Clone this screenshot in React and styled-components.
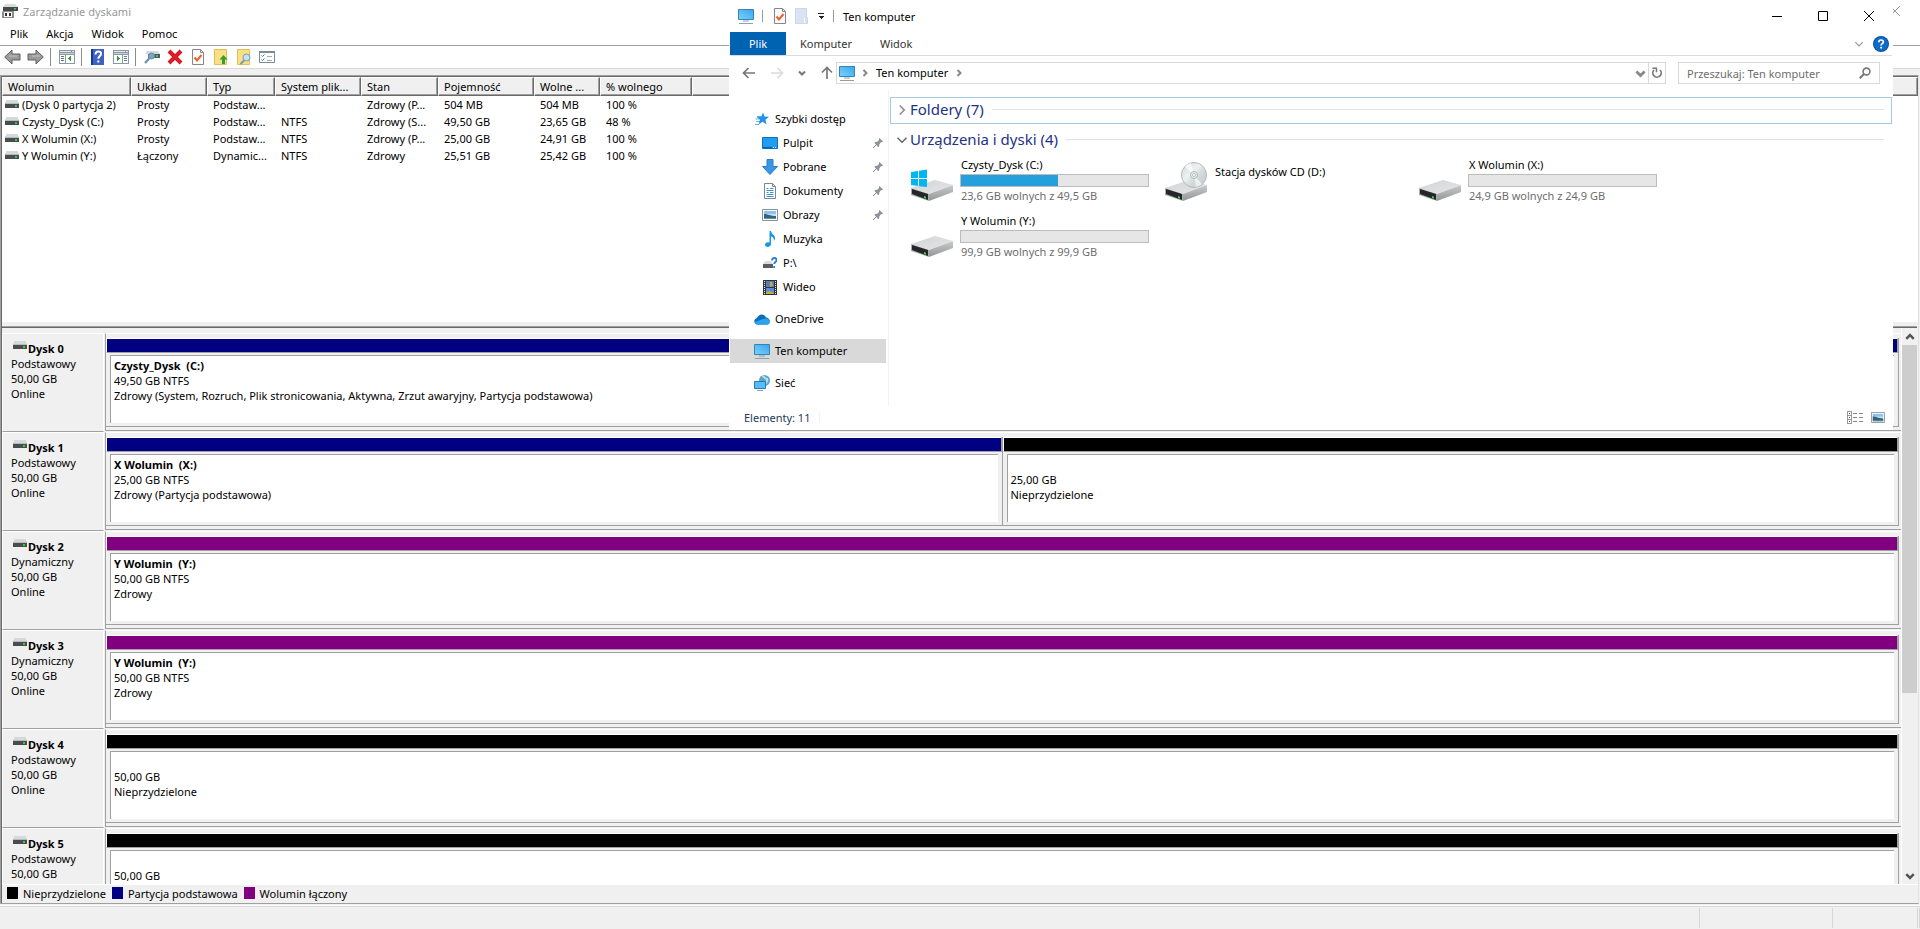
import React from "react";
import styled, { createGlobalStyle } from "styled-components";

const FONT = '"Noto Sans", "Open Sans", "Liberation Sans", sans-serif';
const NAVY = "#000080";
const PURPLE = "#800080";
const BLACK = "#000000";

const GlobalStyle = createGlobalStyle`
  *, *::before, *::after { box-sizing: border-box; }
  body {
    margin: 0;
    background: #f0f0f0;
    color: #000;
    font-family: ${FONT};
    font-size: 11px;
    line-height: 15px;
    overflow: hidden;
  }
  button, input { font: inherit; color: inherit; }
  button { border: 0; padding: 0; background: none; }
  a { color: inherit; text-decoration: none; }
  svg { display: block; flex: none; }
  h1, h2, p, ul { margin: 0; padding: 0; font: inherit; list-style: none; }
`;

/* ---------- Icons ---------- */

const DiskStrip = () => (
  <svg width="14" height="9" viewBox="0 0 14 9" shapeRendering="crispEdges">
    <path d="M1 0h12l1 4H0z" fill="#d5d9db" />
    <path d="M0 4h14v4H0z" fill="#4a4d50" />
    <path d="M0 3h14v1H0z" fill="#b9bcbf" />
    <path d="M10 5h2v2h-2z" fill="#2bd13c" />
  </svg>
);

const AppIcon = () => (
  <svg width="16" height="16" viewBox="0 0 16 16">
    <path d="M3 1h10l3 3H1z" fill="#d9dcde" />
    <path d="M1 4h15v4H1z" fill="#46494c" />
    <path d="M12 5h2v1.500h-2z" fill="#35d047" />
    <path d="M1 8h11v7H0V9z" fill="#8b8e90" />
    <path d="M2 9h8v5H2z" fill="#f6f6f6" />
    <path d="M3 10h2v3H3zM7 10h2v3H7z" fill="#333" />
  </svg>
);

const ToolArrow = ({ flip }) => (
  <svg width="17" height="16" viewBox="0 0 17 16">
    <path
      d="M.7 8 8 1v4h8v6H8v4z"
      transform={flip ? "matrix(-1 0 0 1 17 0)" : undefined}
      fill="#9a9a9a"
      stroke="#5f5f5f"
    />
    <path d="M5 7h8" stroke="#c4c4c4" />
  </svg>
);

const PaneIcon = ({ flip }) => (
  <svg width="16" height="14" viewBox="0 0 16 14" shapeRendering="crispEdges">
    <path d="M0 0h16v14H0z" fill="#8b98a6" />
    <path d="M1 1h11v1H1zM13 1h2v1h-2z" fill="#e6eaee" />
    <path d="M1 3h14v1H1z" fill="#c9d0d6" />
    <path d="M1 5h14v8H1z" fill="#fff" />
    <g transform={flip ? "matrix(-1 0 0 1 16 0)" : undefined}>
      <path d="M6 4h1v9H6z" fill="#8b98a6" />
      <path d="M2 6h3v1H2zM2 8h3v1H2zM2 10h3v1H2z" fill="#6a7684" />
      <path d="M12 5v7L9 8.500z" fill="#2fa52f" />
    </g>
  </svg>
);

const HelpTool = () => (
  <svg width="13" height="16" viewBox="0 0 13 16">
    <path d="M0 0h13v16H0z" fill="#3d62c4" />
    <path d="M0 0h2v16H0z" fill="#173a91" />
    <path d="M4.500 5.500c0-4 5.500-4 5.500-.8 0 2.500-2.700 2.500-2.700 5M7.300 11.500v2" stroke="#fff" strokeWidth="2" fill="none" />
  </svg>
);

const DiskSearch = () => (
  <svg width="16" height="14" viewBox="0 0 16 14">
    <path d="M3 1h11l2 3H1z" fill="#d5d9dc" />
    <path d="M4 4h12v4H4z" fill="#4a5a66" />
    <path d="M12 5h2v2h-2z" fill="#2bd13c" />
    <circle cx="7.500" cy="6" r="3" fill="#7fa6be" stroke="#5e8ba8" />
    <path d="M5.200 8.500 1 13" stroke="#6b8ca3" strokeWidth="2" />
  </svg>
);

const RedCross = () => (
  <svg width="16" height="16" viewBox="0 0 16 16">
    <path d="m2 2 12 12M14 2 2 14" stroke="#d0121b" strokeWidth="4" />
    <path d="m2.500 2.500 11 11M13.500 2.500l-11 11" stroke="#e02028" strokeWidth="2" />
  </svg>
);

const CheckDoc = () => (
  <svg width="12" height="16" viewBox="0 0 12 16">
    <path d="M.5.500h8l3 3v12H.5z" fill="#fbfbfb" stroke="#878787" />
    <path d="M8.500.500v3h3" fill="none" stroke="#878787" />
    <path d="m2.500 8.500 2.500 3 4.500-5.500" fill="none" stroke="#e8622a" strokeWidth="2" />
  </svg>
);

const FolderDoc = ({ kind }) => (
  <svg width="14" height="16" viewBox="0 0 14 16">
    <path d="M.5.500h12v15H.5z" fill="#fbdf85" stroke="#e3bf55" />
    {kind === "up" ? (
      <path d="m9.500 6 4 4.500h-2.500V15H8v-4.500H5.500z" fill="#2ea12e" />
    ) : (
      <>
        <circle cx="9.500" cy="8.500" r="3.500" fill="#c5e2f2" stroke="#6f9dba" />
        <path d="M7 11.500 3.500 15" stroke="#7d97a8" strokeWidth="2" />
      </>
    )}
  </svg>
);

const OptionsIcon = () => (
  <svg width="16" height="12" viewBox="0 0 16 12">
    <path d="M.5.500h15v11H.5z" fill="#fff" stroke="#7c8a96" />
    <path d="M0 0h16v2H0z" fill="#7c8a96" />
    <path d="m2.500 4.500 1 1 2-2M2.500 8.500l1 1 2-2" stroke="#2c86d6" fill="none" />
    <path d="M8 5.500h5M8 9.500h5" stroke="#a3abb2" />
  </svg>
);

const Monitor = () => (
  <svg width="16" height="16" viewBox="0 0 16 16">
    <defs>
      <linearGradient id="screen" x1="0" y1="1" x2="1" y2="0">
        <stop offset="0" stopColor="#7fd0fb" />
        <stop offset="1" stopColor="#34a8f0" />
      </linearGradient>
    </defs>
    <path d="M.5 1.500h15v10H.5z" fill="url(#screen)" stroke="#3683b4" />
    <path d="M5 13h6M1 15.500h14" stroke="#8fa1b0" />
  </svg>
);

const FadedDoc = () => (
  <svg width="13" height="16" viewBox="0 0 13 16">
    <path d="M.5.500h11v9h1v6H.5z" fill="#d9e4f3" stroke="#cbd8ea" />
    <path d="M9.500 10v5" stroke="#f5f8fc" />
  </svg>
);

const CustomizeCaret = () => (
  <svg width="8" height="8" viewBox="0 0 8 8" shapeRendering="crispEdges">
    <path d="M1 1h6v1H1zM1 4h6L4 7z" fill="#222" />
  </svg>
);

const Minimize = () => (
  <svg width="10" height="10" viewBox="0 0 10 10">
    <path d="M0 5.500h10" stroke="#000" />
  </svg>
);
const Maximize = () => (
  <svg width="10" height="10" viewBox="0 0 10 10">
    <path d="M.5.500h9v9h-9z" stroke="#000" fill="none" />
  </svg>
);
const Close = ({ color = "#000" }) => (
  <svg width="10" height="10" viewBox="0 0 10 10">
    <path d="m0 0 10 10M10 0 0 10" stroke={color} />
  </svg>
);

const Chevron = ({ dir = "down", size = 8, color = "#666", weight = 1 }) => {
  const turn = { down: 0, left: 90, up: 180, right: 270 }[dir];
  return (
    <svg width={size} height={size} viewBox="0 0 8 8">
      <path d="m1 2.500 3 3 3-3" transform={`rotate(${turn} 4 4)`} fill="none" stroke={color} strokeWidth={weight} />
    </svg>
  );
};

const NavArrow = ({ turn = 0, color = "#777" }) => (
  <svg width="14" height="14" viewBox="0 0 14 14">
    <path d="M13 7H2M6.500 2 1.500 7l5 5" transform={`rotate(${turn} 7 7)`} fill="none" stroke={color} strokeWidth="1.700" />
  </svg>
);

const HelpBadge = () => (
  <svg width="16" height="16" viewBox="0 0 16 16">
    <circle cx="8" cy="8" r="8" fill="#0b4f9e" />
    <circle cx="8" cy="8" r="7" fill="#0f6cc4" />
    <path d="M5.800 6.200c0-3 4.500-2.800 4.500-.2 0 1.700-2.200 1.700-2.200 3.400M8.100 10.800v1.700" stroke="#fff" strokeWidth="1.700" fill="none" />
  </svg>
);

const Refresh = () => (
  <svg width="12" height="12" viewBox="0 0 12 12">
    <path d="M3 3a4.200 4.200 0 1 0 6 0" fill="none" stroke="#777" strokeWidth="1.700" />
    <path d="M1.500 1.300h4v4" fill="none" stroke="#777" strokeWidth="1.500" />
  </svg>
);

const Magnifier = () => (
  <svg width="12" height="12" viewBox="0 0 12 12">
    <circle cx="7.500" cy="4.500" r="3.400" fill="none" stroke="#777" strokeWidth="1.600" />
    <path d="M5 7 .7 11.300" stroke="#777" strokeWidth="2" />
  </svg>
);

const StarIcon = () => (
  <svg width="16" height="14" viewBox="0 0 16 14">
    <path d="M3 4.500h4M1.500 7h4M2 9.500h4M1 12.500h4" stroke="#62b6ef" />
    <path d="m9 .500 1.500 4 4.500.3-3.500 2.900 1 4.800L8.700 9.800 4.500 12.500 6 7.800 2.700 5l4.500-.3z" fill="#2492e6" />
  </svg>
);

const DesktopIcon = () => (
  <svg width="16" height="12" viewBox="0 0 16 12">
    <path d="M.5.500h15v11H.5z" fill="#1e9df1" stroke="#0a74c2" />
    <path d="M11 10.500h1M13 10.500h1" stroke="#d8effd" />
    <path d="M1 10.500h9" stroke="#0d5fa3" />
  </svg>
);

const DownloadIcon = () => (
  <svg width="16" height="16" viewBox="0 0 16 16">
    <path d="M5 .5h6v7h4.500L8 15.500.500 7.500H5z" fill="#3a96e4" stroke="#2b7cc8" />
  </svg>
);

const DocumentIcon = () => (
  <svg width="12" height="16" viewBox="0 0 12 16">
    <path d="M.5.500h8l3 3v12H.5z" fill="#fff" stroke="#7d868e" />
    <path d="M2.500 5.500h2M6 5.500h3.500M2.500 7.500h7M2.500 9.500h2M6 9.500h3.500M2.500 11.500h7M2.500 13.500h7" stroke="#3b92cf" />
    <path d="M8.500.500v3h3" fill="none" stroke="#7d868e" />
  </svg>
);

const PictureIcon = ({ width = 16, height = 12 }) => (
  <svg width={width} height={height} viewBox="0 0 16 12" preserveAspectRatio="none">
    <path d="M.5.500h15v11H.5z" fill="#fff" stroke="#8a9299" />
    <path d="M2 2h12v4H2z" fill="#8cc3ee" />
    <path d="M2 5h12v3H2z" fill="#c6e2f3" />
    <path d="M2 5c4 0 6 2 12 2v3H2z" fill="#34647a" />
    <path d="M2 9h12v1H2z" fill="#5d8fb0" />
  </svg>
);

const MusicIcon = () => (
  <svg width="12" height="16" viewBox="0 0 12 16">
    <path d="M5.500 0h1.500c.3 3 4.500 4 4 7.500-.2 1.500-1 2-1.300 2.500.5-3-.7-4-2.700-4.500V13c0 3.500-6 4-6 .8 0-2.300 2.800-3 4.500-2.200z" fill="#1b97e5" />
  </svg>
);

const UnknownDrive = () => (
  <svg width="14" height="12" viewBox="0 0 14 12">
    <path d="M2 4h6l2 3H0z" fill="#dadcdf" />
    <path d="M0 7h10v4H0z" fill="#5a5d60" />
    <path d="M9 3.500c0-3.500 4.500-3 4.500-.5 0 2-2.300 2-2.300 4M11.200 9v2" stroke="#2a7fc9" strokeWidth="1.800" fill="none" />
  </svg>
);

const VideoIcon = () => (
  <svg width="14" height="15" viewBox="0 0 14 15">
    <path d="M0 0h14v15H0z" fill="#333" />
    <path d="M3 1h8v6H3z" fill="#4f7ec2" />
    <path d="M3 8h8v6H3z" fill="#5a8fd8" />
    <path d="M7 2h2l1 4-3 1zM3 12l3-1 5 2v1H3z" fill="#cda83c" />
    <path d="M1.500 1v14M12.500 1v14" stroke="#eee" strokeDasharray="1 1" />
  </svg>
);

const CloudIcon = () => (
  <svg width="16" height="11" viewBox="0 0 16 11">
    <path d="M4 10.500C-1 10.500-.5 4.500 3 4c1.500-4 7-5 9-.500C16.500 3.500 17 10.500 13 10.500z" fill="#0f6cbd" />
    <path d="M4 10.700c-2.500 0-3-2-2.500-3L9 5c4-1.500 7 0 7 2.500 0 2-1.300 3.200-3 3.200z" fill="#2ba4ec" />
  </svg>
);

const NetworkIcon = () => (
  <svg width="16" height="16" viewBox="0 0 16 16">
    <circle cx="10.500" cy="5.500" r="5.500" fill="#5ba4c9" />
    <path d="M8 1c3 0 2 3 5 3 1 2-1 4-2 5" fill="none" stroke="#b9dfec" strokeWidth="2" />
    <path d="M.5 6.500h11v7H.5z" fill="#58bdf7" stroke="#287cb5" />
    <path d="M3 15.500h6" stroke="#8fa1b0" />
  </svg>
);

const PinIcon = () => (
  <svg width="10" height="10" viewBox="0 0 10 10">
    <path d="m6.500 0 3.500 3.500-1 .7-.7-.2L6.500 6 6 8.500l-1 .5L1.500 5l.5-1 2.300-.3L6.200 2 5.800 1z" fill="#8b9399" />
    <path d="M3.500 6.500 0 10" stroke="#8b9399" />
  </svg>
);

const DriveGraphic = styled.svg`
  margin-top: 5px;
`;

const DriveIcon = ({ kind }) => (
  <DriveGraphic width="44" height="40" viewBox="0 0 44 40">
    <defs>
      <linearGradient id="lid" x1="0" y1="0" x2="1" y2="1">
        <stop offset="0" stopColor="#d2d3d5" />
        <stop offset="1" stopColor="#e6e7e9" />
      </linearGradient>
      <linearGradient id="side" x1="0" y1="0" x2="0" y2="1">
        <stop offset="0" stopColor="#c9cacc" />
        <stop offset="1" stopColor="#949597" />
      </linearGradient>
      <linearGradient id="disc" x1="0" y1="0" x2="1" y2="1">
        <stop offset="0" stopColor="#cfd6d8" />
        <stop offset=".4" stopColor="#eef1f1" />
        <stop offset=".6" stopColor="#d2dcd9" />
        <stop offset="1" stopColor="#c3c8cc" />
      </linearGradient>
    </defs>
    <path d="M1 26 25 18l18 5-24 9z" fill="url(#lid)" />
    <path d="m19 32 24-9v7l-24 9z" fill="url(#side)" />
    <path d="m1 26 18 6v7L1 33z" fill="#a9aaac" />
    <path d="m2 27 16 5v6L2 32z" fill="#252627" />
    <path d="m14 34 2 .7v2l-2-.7z" fill="#39d84c" />
    {kind === "system" && (
      <path d="m1 10 7-1v7H1zM9 8.800 17 7.500V16H9zM1 17h7v7l-7-1zM9 17h8v8L9 24.200z" fill="#00b7f1" />
    )}
    {kind === "cd" && (
      <>
        <circle cx="30" cy="13" r="12.500" fill="url(#disc)" stroke="#b3b8ba" />
        <path d="M30 13 21 4.500A12 12 0 0 1 27 1z" fill="#fff" opacity=".7" />
        <path d="m30 13 8 9a12 12 0 0 1-6 3z" fill="#fff" opacity=".6" />
        <circle cx="30" cy="13" r="3.500" fill="#eef0f0" stroke="#aeb3b5" />
        <circle cx="30" cy="13" r="1.500" fill="#fff" stroke="#b8bdbf" />
      </>
    )}
  </DriveGraphic>
);

const DetailsIcon = () => (
  <svg width="17" height="13" viewBox="0 0 17 13" shapeRendering="crispEdges">
    <path d="M.5.500h4v4h-4zM.5 4.500h4v4h-4zM.5 8.500h4v4h-4z" fill="#fff" stroke="#999" />
    <path d="M2 2h1v1H2zM2 6h1v1H2zM2 10h1v1H2z" fill="#555" />
    <path d="M6 2h4v1H6zM12 2h4v1h-4zM6 6h4v1H6zM12 6h4v1h-4zM6 10h4v1H6zM12 10h4v1h-4z" fill="#888" />
  </svg>
);

/* ---------- Disk management window ---------- */

const Desktop = styled.main`
  position: relative;
  display: flex;
  flex-direction: column;
  height: 100vh;
`;

const TitleBar = styled.header`
  display: flex;
  align-items: center;
  gap: 5px;
  height: 24px;
  padding: 0 20px 2px 2px;
  background: #fff;
  color: #999;
`;

const Title = styled.h1`
  flex: 1;
`;

const MenuBar = styled.nav`
  display: flex;
  gap: 18px;
  height: 22px;
  padding: 0 10px 2px;
  background: #fff;
  border-bottom: 1px solid #a0a0a0;
`;

const Toolbar = styled.div`
  display: flex;
  align-items: center;
  gap: 6px;
  height: 23px;
  padding: 0 4px;
  background: #fff;
  border-bottom: 1px solid #d9d9d9;
`;

const ToolButton = styled.button`
  display: grid;
  place-items: center;
  width: 17px;
  height: 20px;
`;

const Separator = styled.span`
  width: 1px;
  height: ${(p) => p.$height || 18}px;
  margin-right: 1px;
  background: ${(p) => p.$color || "#8c8c8c"};
`;

const Frame = styled.section`
  flex: 1;
  min-height: 0;
  display: flex;
  flex-direction: column;
  margin: 6px 1px 1px 0;
  border: 1px solid #a0a0a0;
  border-right-color: #e3e3e3;
  box-shadow: inset 1px 1px 0 #696969;
  padding: 1px 0 0 1px;
`;

const VolumePane = styled.div`
  flex: none;
  height: 243px;
  background: #fff;
`;

const VolumeTable = styled.table`
  width: 100%;
  table-layout: fixed;
  border-collapse: separate;
  border-spacing: 0;
  th, td {
    padding: 0 0 0 6px;
    text-align: left;
    font-weight: 400;
    white-space: nowrap;
    overflow: hidden;
  }
  th {
    height: 19px;
    padding-left: 5px;
    background: #f0f0f0;
    border: 1px solid #fff;
    border-right-color: #696969;
    border-bottom-color: #696969;
    box-shadow: inset -1px -1px 0 #a0a0a0;
  }
  td { height: 17px; }
`;

const VolumeName = styled.span`
  display: flex;
  align-items: center;
  gap: 3px;
  margin-left: -3px;
`;

const Splitter = styled.div`
  flex: none;
  height: 8px;
  margin-right: 1px;
  background: #f0f0f0;
  border-bottom: 1px solid #696969;
  box-shadow: inset 0 -1px 0 #a0a0a0, inset 0 3px 0 -1px #fff;
`;

const DiskPane = styled.div`
  flex: 1;
  min-height: 0;
  display: flex;
  overflow: hidden;
`;

const DiskList = styled.ul`
  flex: 1;
  padding-top: 5px;
  overflow: hidden;
  border-right: 1px solid #fff;
`;

const DiskRow = styled.li`
  display: flex;
  height: 99px;
`;

const DiskLabel = styled.div`
  width: 102px;
  padding: 7px 8px;
  border: 1px solid #fff;
  border-bottom-color: #a0a0a0;
`;

const DiskName = styled.h2`
  display: flex;
  gap: 1px;
  padding-left: 2px;
  font-weight: 700;
`;

const Partitions = styled.div`
  flex: 1;
  display: flex;
  margin: 0 0 1px 1px;
  padding: 4px 2px 3px 0;
  border-left: 1px solid #a0a0a0;
  border-top: 1px solid #fff;
  border-bottom: 1px solid #a0a0a0;
`;

const Partition = styled.div`
  flex: 1;
  display: flex;
  flex-direction: column;
  border-right: 1px solid #a0a0a0;
  border-bottom: 1px solid #a0a0a0;
`;

const PartitionBar = styled.div`
  height: 15px;
  background: ${(p) => p.$color};
  border: 1px solid #fff;
  border-right-color: #a0a0a0;
  border-bottom-color: #a0a0a0;
`;

const PartitionBody = styled.div`
  flex: 1;
  margin: 2px 4px 3px 4px;
  padding: 2px 3px;
  background: #fff;
  border: solid #a0a0a0;
  border-width: 1px 0 0 1px;
  white-space: pre;
`;

const PartitionName = styled.p`
  min-height: 15px;
  font-weight: 700;
`;

const ScrollTrack = styled.div`
  display: flex;
  flex-direction: column;
  width: 16px;
  padding-right: 1px;
`;

const ScrollButton = styled.button`
  display: grid;
  place-items: center;
  height: 17px;
`;

const ScrollRun = styled.div`
  flex: 1;
`;

const ScrollThumb = styled.div`
  height: calc(100% * 2 / 3);
  background: #cdcdcd;
`;

const Legend = styled.ul`
  display: flex;
  align-items: center;
  gap: 6px;
  height: 19px;
  padding: 0 0 2px 5px;
  border-top: 1px solid #fff;
`;

const LegendItem = styled.li`
  display: flex;
  align-items: center;
  gap: 5px;
  &::before {
    content: "";
    width: 11px;
    height: 12px;
    background: ${(p) => p.$color};
  }
`;

const StatusBar = styled.footer`
  display: flex;
  height: 24px;
  padding-top: 2px;
  border-top: 1px solid #fff;
  box-shadow: inset 0 1px 0 #d7d7d7;
`;

const StatusCell = styled.div`
  width: ${(p) => p.$width};
  flex: ${(p) => (p.$width ? "none" : 1)};
  margin-bottom: 1px;
  border-right: 1px solid #d7d7d7;
`;

/* ---------- Explorer window ---------- */

const Explorer = styled.section`
  position: absolute;
  top: 0;
  left: 729px;
  right: 27px;
  background: #fff;
  padding: 0 1px;
`;

const ExplorerTitle = styled.header`
  display: flex;
  align-items: center;
  gap: 8px;
  height: 32px;
  padding: 0 0 0 8px;
`;

const QuickAccess = styled.div`
  display: flex;
  gap: 9px;
  align-items: center;
  padding: 0 0 0 2px;
`;

const ExplorerName = styled.h1`
  flex: 1;
`;

const WindowButton = styled.button`
  display: grid;
  place-items: center;
  width: 46px;
  height: 32px;
`;

const WindowButtons = styled.div`
  display: flex;
`;

const Tabs = styled.nav`
  display: flex;
  align-items: center;
  height: 24px;
  padding-right: 3px;
  box-shadow: inset 0 -1px 0 #dadbdc;
`;

const Tab = styled.button`
  min-width: 56px;
  height: 23px;
  padding: 0 14px;
  align-self: flex-start;
  background: ${(p) => (p.$active ? "#0063b1" : "none")};
  color: ${(p) => (p.$active ? "#fff" : "#333")};
`;

const TabTools = styled.div`
  display: flex;
  align-items: center;
  gap: 9px;
  margin-left: auto;
`;

const AddressRow = styled.div`
  display: flex;
  align-items: center;
  height: 34px;
  padding: 0 12px;
`;

const NavButtons = styled.div`
  display: flex;
  align-items: center;
  gap: 14px;
  width: 94px;
  padding-bottom: 1px;
`;

const IconButton = styled.button`
  display: grid;
  place-items: center;
  height: 20px;
`;

const AddressBox = styled.div`
  flex: 1;
  display: flex;
  align-items: center;
  gap: 6px;
  height: 22px;
  padding-left: 2px;
  border: 1px solid #d9d9d9;
`;

const Crumb = styled.a`
  padding: 0 1px 2px;
`;

const AddressEnd = styled.div`
  display: flex;
  align-items: center;
  height: 20px;
  margin-left: auto;
`;

const RefreshButton = styled(IconButton)`
  width: 17px;
  margin-left: 2px;
  border-left: 1px solid #d9d9d9;
`;

const SearchBox = styled.label`
  display: flex;
  align-items: center;
  width: 202px;
  height: 22px;
  margin-left: 12px;
  padding: 0 8px;
  border: 1px solid #d9d9d9;
`;

const SearchInput = styled.input`
  flex: 1;
  min-width: 0;
  height: 20px;
  padding: 0;
  border: 0;
  outline: 0;
  background: none;
  &::placeholder { color: #6d6d6d; opacity: 1; }
`;

const ExplorerBody = styled.div`
  display: flex;
  min-height: 316px;
`;

const NavPane = styled.ul`
  width: 159px;
  padding: 17px 2px 0 0;
  border-right: 1px solid #f2f2f2;
`;

const NavItem = styled.li`
  margin-bottom: ${(p) => (p.$last ? 8 : 0)}px;
  background: ${(p) => (p.$selected ? "#d9d9d9" : "none")};
`;

const NavLink = styled.a`
  display: flex;
  align-items: center;
  gap: 5px;
  height: 24px;
  padding: 0 3px 0 ${(p) => (p.$child ? 32 : 24)}px;
`;

const NavGlyph = styled.span`
  display: grid;
  place-items: center;
  width: 16px;
`;

const NavText = styled.span`
  flex: 1;
  padding-bottom: 2px;
`;

const Content = styled.div`
  flex: 1;
  padding: 7px 0 0 1px;
`;

const GroupHeader = styled.button`
  display: flex;
  align-items: center;
  gap: 2px;
  width: 100%;
  height: 27px;
  margin-bottom: 3px;
  padding: 0 7px 2px 5px;
  border: 1px solid ${(p) => (p.$focused ? "#a6cbe0" : "transparent")};
  color: #1e3287;
  font-size: 15px;
  &::after {
    content: "";
    flex: 1;
    height: 1px;
    margin-left: 6px;
    background: #e2e2e2;
  }
`;

const Drives = styled.ul`
  display: grid;
  grid-template-columns: repeat(auto-fill, 254px);
  padding-left: 20px;
`;

const Drive = styled.li`
  display: flex;
  align-items: flex-start;
  gap: 6px;
  height: 56px;
`;

const DriveInfo = styled.div`
  flex: none;
  width: 189px;
  padding-top: ${(p) => (p.$plain ? 7 : 0)}px;
`;

const DriveText = styled.p`
  padding-left: 1px;
  color: ${(p) => (p.$muted ? "#6d6d6d" : "#000")};
`;

const Usage = styled.div`
  height: 13px;
  margin: 2px 0 1px;
  background: #e6e6e6;
  border: 1px solid #bcbcbc;
`;

const UsageFill = styled.div`
  height: 100%;
  background: #26a0da;
`;

const ExplorerStatus = styled.footer`
  display: flex;
  align-items: center;
  gap: 9px;
  height: 24px;
  padding: 0 7px 2px 14px;
  color: #1e395b;
`;

const ViewButtons = styled.div`
  display: flex;
  align-items: center;
  gap: 7px;
  margin-left: auto;
`;

/* ---------- Data ---------- */

const columns = [
  ["Wolumin", 129],
  ["Układ", 76],
  ["Typ", 68],
  ["System plik...", 86],
  ["Stan", 77],
  ["Pojemność", 96],
  ["Wolne ...", 66],
  ["% wolnego", 92],
  ["", null],
];

const volumes = [
  ["(Dysk 0 partycja 2)", "Prosty", "Podstaw...", "", "Zdrowy (P...", "504 MB", "504 MB", "100 %"],
  ["Czysty_Dysk (C:)", "Prosty", "Podstaw...", "NTFS", "Zdrowy (S...", "49,50 GB", "23,65 GB", "48 %"],
  ["X Wolumin (X:)", "Prosty", "Podstaw...", "NTFS", "Zdrowy (P...", "25,00 GB", "24,91 GB", "100 %"],
  ["Y Wolumin (Y:)", "Łączony", "Dynamic...", "NTFS", "Zdrowy", "25,51 GB", "25,42 GB", "100 %"],
];

const spanned = { color: PURPLE, name: "Y Wolumin  (Y:)", lines: ["50,00 GB NTFS", "Zdrowy"] };
const unallocated = (...lines) => ({ color: BLACK, name: "", lines });

const disks = [
  {
    info: ["Podstawowy", "50,00 GB", "Online"],
    parts: [
      {
        color: NAVY,
        name: "Czysty_Dysk  (C:)",
        lines: [
          "49,50 GB NTFS",
          "Zdrowy (System, Rozruch, Plik stronicowania, Aktywna, Zrzut awaryjny, Partycja podstawowa)",
        ],
      },
    ],
  },
  {
    info: ["Podstawowy", "50,00 GB", "Online"],
    parts: [
      { color: NAVY, name: "X Wolumin  (X:)", lines: ["25,00 GB NTFS", "Zdrowy (Partycja podstawowa)"] },
      unallocated("25,00 GB", "Nieprzydzielone"),
    ],
  },
  { info: ["Dynamiczny", "50,00 GB", "Online"], parts: [spanned] },
  { info: ["Dynamiczny", "50,00 GB", "Online"], parts: [spanned] },
  { info: ["Podstawowy", "50,00 GB", "Online"], parts: [unallocated("50,00 GB", "Nieprzydzielone")] },
  { info: ["Podstawowy", "50,00 GB"], parts: [unallocated("50,00 GB")] },
];

const tools = [
  ["Wstecz", <ToolArrow />],
  ["Dalej", <ToolArrow flip />],
  null,
  ["Drzewo konsoli", <PaneIcon />],
  null,
  ["Pomoc", <HelpTool />],
  ["Okienko akcji", <PaneIcon flip />],
  null,
  ["Skanuj dyski", <DiskSearch />],
  ["Usuń", <RedCross />],
  ["Właściwości", <CheckDoc />],
  ["Otwórz", <FolderDoc kind="up" />],
  ["Eksploruj", <FolderDoc />],
  ["Opcje", <OptionsIcon />],
];

const places = [
  { name: "Szybki dostęp", icon: <StarIcon /> },
  { name: "Pulpit", icon: <DesktopIcon />, child: true, pinned: true },
  { name: "Pobrane", icon: <DownloadIcon />, child: true, pinned: true },
  { name: "Dokumenty", icon: <DocumentIcon />, child: true, pinned: true },
  { name: "Obrazy", icon: <PictureIcon />, child: true, pinned: true },
  { name: "Muzyka", icon: <MusicIcon />, child: true },
  { name: "P:\\", icon: <UnknownDrive />, child: true },
  { name: "Wideo", icon: <VideoIcon />, child: true, last: true },
  { name: "OneDrive", icon: <CloudIcon />, last: true },
  { name: "Ten komputer", icon: <Monitor />, selected: true, last: true },
  { name: "Sieć", icon: <NetworkIcon />, last: true },
];

const drives = [
  { name: "Czysty_Dysk (C:)", kind: "system", used: 52, free: "23,6 GB wolnych z 49,5 GB" },
  { name: "Stacja dysków CD (D:)", kind: "cd" },
  { name: "X Wolumin (X:)", used: 0, free: "24,9 GB wolnych z 24,9 GB" },
  { name: "Y Wolumin (Y:)", used: 0, free: "99,9 GB wolnych z 99,9 GB" },
];

/* ---------- Views ---------- */

const DiskManagement = () => (
  <>
    <TitleBar>
      <AppIcon />
      <Title>Zarządzanie dyskami</Title>
      <Close color="#999" />
    </TitleBar>
    <MenuBar>
      {["Plik", "Akcja", "Widok", "Pomoc"].map((m) => (
        <button key={m}>{m}</button>
      ))}
    </MenuBar>
    <Toolbar>
      {tools.map((t, i) =>
        t ? (
          <ToolButton key={i} aria-label={t[0]}>
            {t[1]}
          </ToolButton>
        ) : (
          <Separator key={i} />
        )
      )}
    </Toolbar>
    <Frame>
      <VolumePane>
        <VolumeTable>
          <colgroup>
            {columns.map(([name, width]) => (
              <col key={name} width={width || undefined} />
            ))}
          </colgroup>
          <thead>
            <tr>
              {columns.map(([name]) => (
                <th key={name}>{name}</th>
              ))}
            </tr>
          </thead>
          <tbody>
            {volumes.map(([name, ...cells]) => (
              <tr key={name}>
                <td>
                  <VolumeName>
                    <DiskStrip />
                    {name}
                  </VolumeName>
                </td>
                {cells.map((c, i) => (
                  <td key={i}>{c}</td>
                ))}
                <td />
              </tr>
            ))}
          </tbody>
        </VolumeTable>
      </VolumePane>
      <Splitter />
      <DiskPane>
        <DiskList>
          {disks.map((disk, i) => (
            <DiskRow key={i}>
              <DiskLabel>
                <DiskName>
                  <DiskStrip />
                  Dysk {i}
                </DiskName>
                {disk.info.map((line) => (
                  <p key={line}>{line}</p>
                ))}
              </DiskLabel>
              <Partitions>
                {disk.parts.map((part, j) => (
                  <Partition key={j}>
                    <PartitionBar $color={part.color} />
                    <PartitionBody>
                      <PartitionName>{part.name}</PartitionName>
                      {part.lines.map((line) => (
                        <p key={line}>{line}</p>
                      ))}
                    </PartitionBody>
                  </Partition>
                ))}
              </Partitions>
            </DiskRow>
          ))}
        </DiskList>
        <ScrollTrack>
          <ScrollButton aria-label="W górę">
            <Chevron dir="up" size={10} color="#555" weight={2} />
          </ScrollButton>
          <ScrollRun>
            <ScrollThumb />
          </ScrollRun>
          <ScrollButton aria-label="W dół">
            <Chevron size={10} color="#555" weight={2} />
          </ScrollButton>
        </ScrollTrack>
      </DiskPane>
      <Legend>
        <LegendItem $color={BLACK}>Nieprzydzielone</LegendItem>
        <LegendItem $color={NAVY}>Partycja podstawowa</LegendItem>
        <LegendItem $color={PURPLE}>Wolumin łączony</LegendItem>
      </Legend>
    </Frame>
    <StatusBar>
      <StatusCell />
      <StatusCell $width="133px" />
      <StatusCell $width="85px" />
      <StatusCell $width="2px" />
    </StatusBar>
  </>
);

const FileExplorer = () => (
  <Explorer>
    <ExplorerTitle>
      <Monitor />
      <Separator $height={12} $color="#9a9a9a" />
      <QuickAccess>
        <CheckDoc />
        <FadedDoc />
        <CustomizeCaret />
      </QuickAccess>
      <Separator $height={12} $color="#9a9a9a" />
      <ExplorerName>Ten komputer</ExplorerName>
      <WindowButtons>
        <WindowButton aria-label="Minimalizuj">
          <Minimize />
        </WindowButton>
        <WindowButton aria-label="Maksymalizuj">
          <Maximize />
        </WindowButton>
        <WindowButton aria-label="Zamknij">
          <Close />
        </WindowButton>
      </WindowButtons>
    </ExplorerTitle>
    <Tabs>
      <Tab $active>Plik</Tab>
      <Tab>Komputer</Tab>
      <Tab>Widok</Tab>
      <TabTools>
        <IconButton aria-label="Rozwiń wstążkę">
          <Chevron size={10} color="#999" />
        </IconButton>
        <IconButton aria-label="Pomoc">
          <HelpBadge />
        </IconButton>
      </TabTools>
    </Tabs>
    <AddressRow>
      <NavButtons>
        <IconButton aria-label="Wstecz">
          <NavArrow />
        </IconButton>
        <IconButton aria-label="Dalej">
          <NavArrow turn={180} color="#dcdcdc" />
        </IconButton>
        <IconButton aria-label="Ostatnie lokalizacje">
          <Chevron color="#777" weight={2} />
        </IconButton>
        <IconButton aria-label="W górę">
          <NavArrow turn={90} />
        </IconButton>
      </NavButtons>
      <AddressBox>
        <Monitor />
        <Chevron dir="right" weight={2} color="#888" />
        <Crumb href="#komputer">Ten komputer</Crumb>
        <Chevron dir="right" weight={2} color="#888" />
        <AddressEnd>
          <IconButton aria-label="Poprzednie lokalizacje">
            <Chevron size={11} weight={2} color="#888" />
          </IconButton>
          <RefreshButton aria-label="Odśwież">
            <Refresh />
          </RefreshButton>
        </AddressEnd>
      </AddressBox>
      <SearchBox>
        <SearchInput aria-label="Przeszukaj: Ten komputer" placeholder="Przeszukaj: Ten komputer" />
        <Magnifier />
      </SearchBox>
    </AddressRow>
    <ExplorerBody>
      <NavPane>
        {places.map((p) => (
          <NavItem key={p.name} $selected={p.selected} $last={p.last}>
            <NavLink href="#miejsce" $child={p.child}>
              <NavGlyph>{p.icon}</NavGlyph>
              <NavText>{p.name}</NavText>
              {p.pinned && <PinIcon />}
            </NavLink>
          </NavItem>
        ))}
      </NavPane>
      <Content>
        <GroupHeader $focused>
          <Chevron dir="right" size={12} color="#888" />
          Foldery (7)
        </GroupHeader>
        <GroupHeader>
          <Chevron size={12} color="#666" />
          Urządzenia i dyski (4)
        </GroupHeader>
        <Drives>
          {drives.map((d) => (
            <Drive key={d.name}>
              <DriveIcon kind={d.kind} />
              <DriveInfo $plain={!d.free}>
                <DriveText>{d.name}</DriveText>
                {d.free && (
                  <>
                    <Usage>
                      <UsageFill style={{ width: `${d.used}%` }} />
                    </Usage>
                    <DriveText $muted>{d.free}</DriveText>
                  </>
                )}
              </DriveInfo>
            </Drive>
          ))}
        </Drives>
      </Content>
    </ExplorerBody>
    <ExplorerStatus>
      <span>Elementy: 11</span>
      <Separator $height={11} $color="#f0f0f0" />
      <ViewButtons>
        <IconButton aria-label="Szczegóły">
          <DetailsIcon />
        </IconButton>
        <IconButton aria-label="Duże ikony">
          <PictureIcon width={14} height={11} />
        </IconButton>
      </ViewButtons>
    </ExplorerStatus>
  </Explorer>
);

const App = () => (
  <>
    <GlobalStyle />
    <Desktop>
      <DiskManagement />
      <FileExplorer />
    </Desktop>
  </>
);

export default App;
